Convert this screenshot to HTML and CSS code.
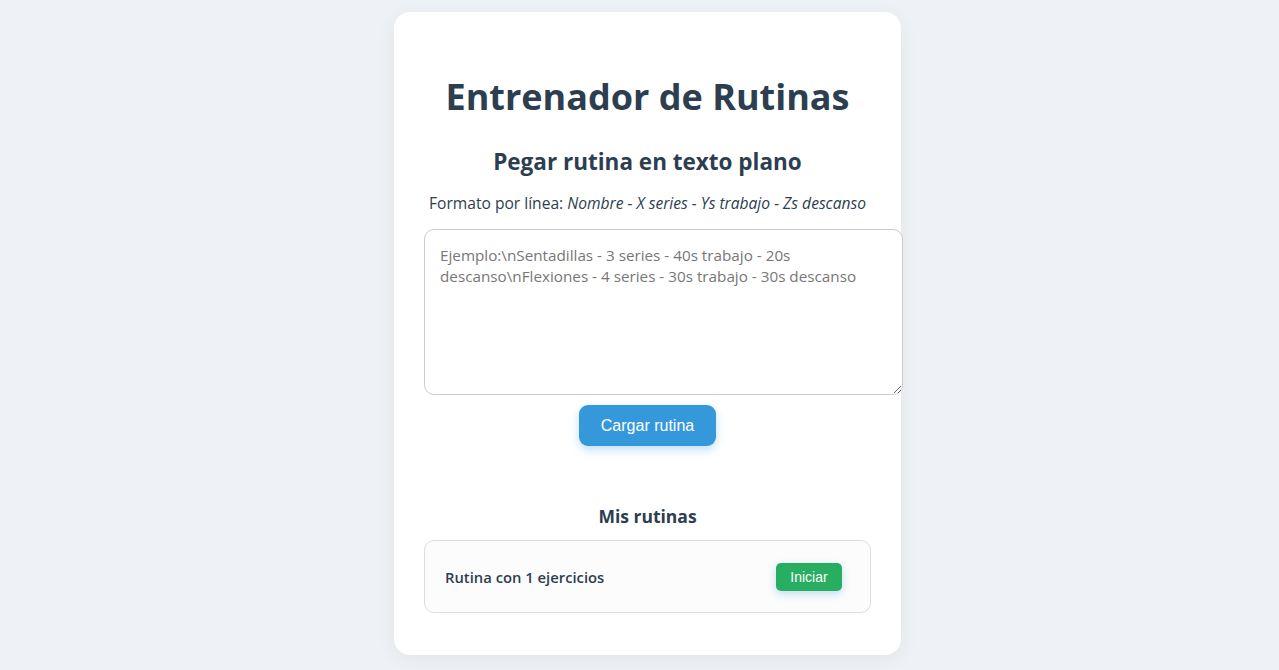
FILE: index.html
```html
<!DOCTYPE html>
<html lang="es">
<head>
<meta charset="utf-8">
<title>Entrenador de Rutinas</title>
<link rel="stylesheet" href="styles.css">
</head>
<body>
  <main class="card">
    <h1 class="title">Entrenador de Rutinas</h1>
    <section class="paste">
      <h2 class="subtitle">Pegar rutina en texto plano</h2>
      <p class="hint">Formato por línea: <em>Nombre - X series - Ys trabajo - Zs descanso</em></p>
      <textarea class="input" placeholder="Ejemplo:\nSentadillas - 3 series - 40s trabajo - 20s descanso\nFlexiones - 4 series - 30s trabajo - 30s descanso"></textarea>
      <button class="btn-load">Cargar rutina</button>
    </section>
    <section class="mine">
      <h3 class="mine-title">Mis rutinas</h3>
      <div class="routine">
        <span class="routine-name">Rutina con 1 ejercicios</span>
        <button class="btn-start">Iniciar</button>
      </div>
    </section>
  </main>
</body>
</html>
```
FILE: styles.css
```css
html, body {
  margin: 0;
  padding: 0;
}
body {
  background: #eef2f7;
  font-family: "Open Sans", sans-serif;
  color: #2c3e50;
  padding: 12px 0 15px 16px;
}
.card {
  width: 447px;
  margin: 0 auto;
  background: #fff;
  border-radius: 16px;
  padding: 30px 30px 42px;
  box-shadow: 0 4px 20px rgba(0, 0, 0, 0.06);
  text-align: center;
}
.title {
  font-size: 36px;
  font-weight: 700;
  margin: 30px 0 0;
  line-height: 50px;
}
.subtitle {
  font-size: 22.5px;
  font-weight: 700;
  margin: 25px 0 0;
  line-height: 30px;
}
.hint {
  font-size: 15.6px;
  margin: 15px 0 0;
  line-height: 22px;
}
.input {
  display: block;
  width: 447px;
  height: 134px;
  margin: 15px 0 0;
  padding: 15px;
  border: 1px solid #ccc;
  border-radius: 10px;
  font-family: inherit;
  font-size: 15.25px;
  line-height: 21px;
  color: #333;
  resize: vertical;
}
.input::placeholder {
  color: #777;
}
.btn-load {
  display: block;
  margin: 10px auto 0;
  background: #3498db;
  color: #fff;
  border: none;
  border-radius: 9px;
  font-family: "Liberation Sans", Arial, sans-serif;
  font-size: 16px;
  padding: 0 22px;
  height: 41px;
  box-shadow: 0 4px 10px rgba(52, 152, 219, 0.3);
  cursor: pointer;
}
.mine {
  margin-top: 58px;
}
.mine-title {
  font-size: 17.5px;
  font-weight: 700;
  margin: 0 0 12px;
  line-height: 24px;
}
.routine {
  display: flex;
  align-items: center;
  justify-content: space-between;
  height: 71px;
  padding: 0 28px 0 20px;
  border: 1px solid #ddd;
  border-radius: 10px;
  background: #fcfcfc;
}
.routine-name {
  font-size: 14.8px;
  font-weight: 600;
}
.btn-start {
  background: #27ae60;
  color: #fff;
  border: none;
  border-radius: 5px;
  font-family: "Liberation Sans", Arial, sans-serif;
  font-size: 14px;
  width: 66px;
  height: 28px;
  padding: 0;
  box-shadow: 0 3px 8px rgba(52, 152, 219, 0.3);
  cursor: pointer;
}
```
